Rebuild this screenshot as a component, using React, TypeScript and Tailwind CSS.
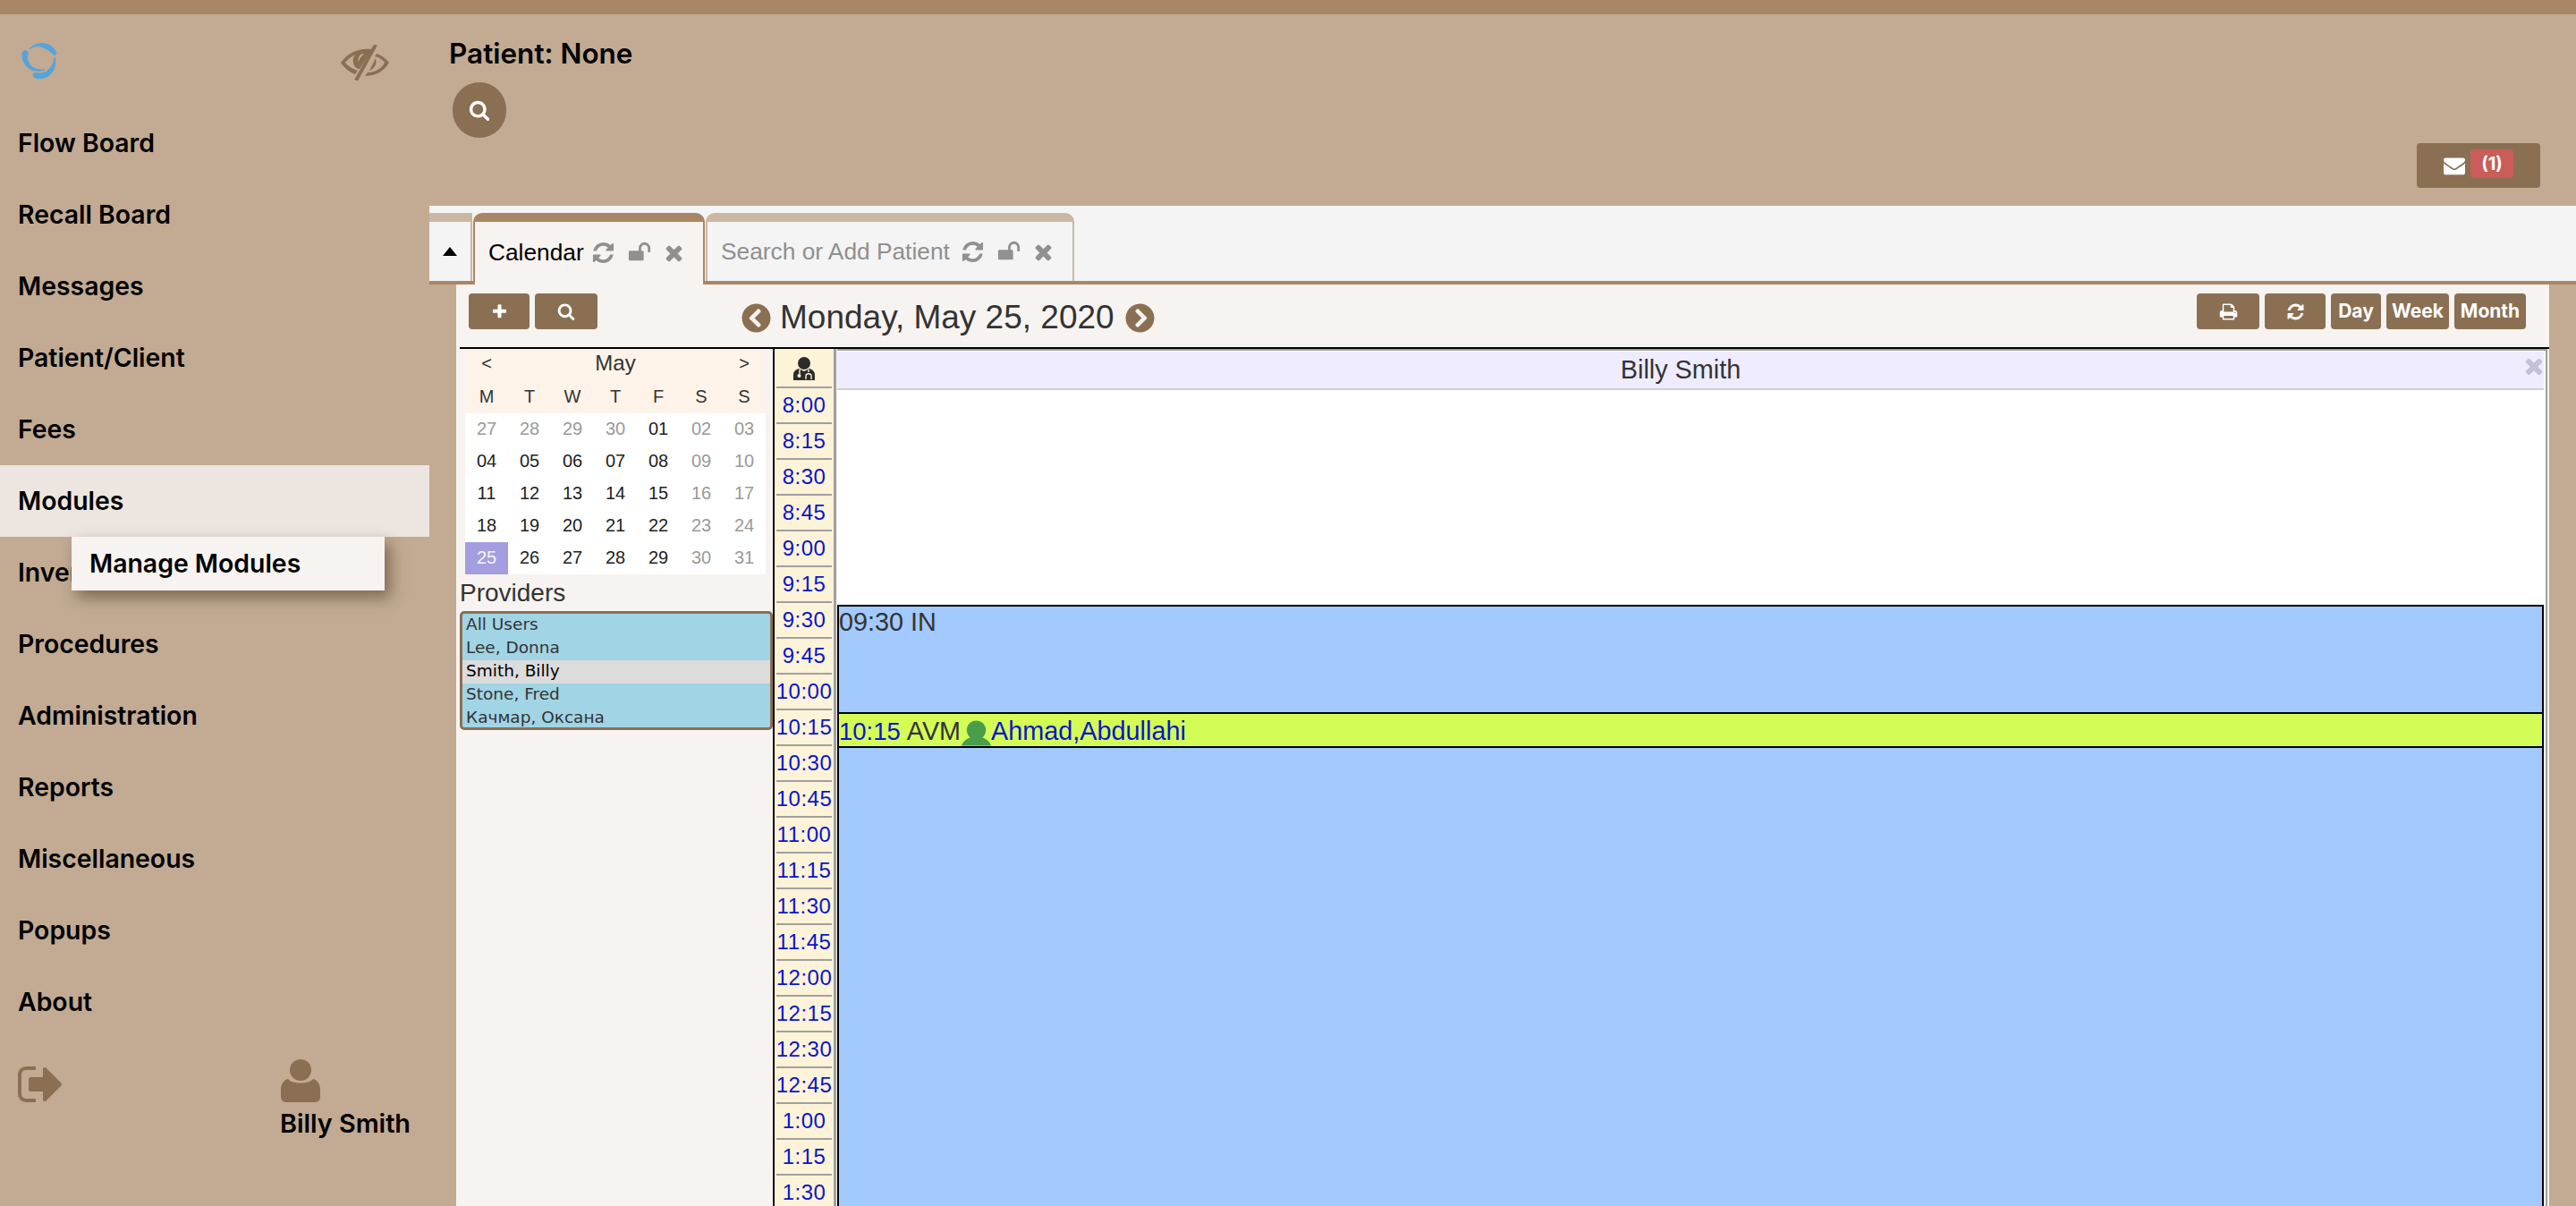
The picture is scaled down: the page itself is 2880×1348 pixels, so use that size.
import React from 'react';
import { FaChevronCircleLeft, FaChevronCircleRight } from 'react-icons/fa';

// glyph paths on a 1792 grid
const REFRESH = 'M1639 1056q0 5-1 7-64 268-268 434.5t-478 166.5q-146 0-282.5-55t-243.5-157l-129 129q-19 19-45 19t-45-19-19-45v-448q0-26 19-45t45-19h448q26 0 45 19t19 45-19 45l-137 137q71 66 161 102t187 36q134 0 250-65t186-179q11-17 53-117 8-23 30-23h192q13 0 22.5 9.5t9.5 22.5zm25-800v448q0 26-19 45t-45 19h-448q-26 0-45-19t-19-45 19-45l138-138q-148-137-349-137-134 0-250 65t-186 179q-11 17-53 117-8 23-30 23h-199q-13 0-22.5-9.5t-9.5-22.5v-7q65-268 270-434.5t480-166.5q146 0 284 55.5t245 156.5l130-129q19-19 45-19t45 19 19 45z';
const UNLOCK = 'M1728 576v256q0 26-19 45t-45 19h-64q-26 0-45-19t-19-45v-256q0-106-75-181t-181-75-181 75-75 181v192h96q40 0 68 28t28 68v576q0 40-28 68t-68 28h-960q-40 0-68-28t-28-68v-576q0-40 28-68t68-28h672v-192q0-185 131.5-316.5t316.5-131.5 316.5 131.5 131.5 316.5z';
const CLOSE = 'M1490 1322q0 40-28 68l-136 136q-28 28-68 28t-68-28l-294-294-294 294q-28 28-68 28t-68-28l-136-136q-28-28-28-68t28-68l294-294-294-294q-28-28-28-68t28-68l136-136q28-28 68-28t68 28l294 294 294-294q28-28 68-28t68 28l136 136q28 28 28 68t-28 68l-294 294 294 294q28 28 28 68z';
const SEARCH = 'M1216 832q0-185-131.5-316.5t-316.5-131.5-316.5 131.5-131.5 316.5 131.5 316.5 316.5 131.5 316.5-131.5 131.5-316.5zm512 832q0 52-38 90t-90 38q-54 0-90-38l-343-342q-179 124-399 124-143 0-273.5-55.5t-225-150-150-225-55.5-273.5 55.5-273.5 150-225 225-150 273.5-55.5 273.5 55.5 225 150 150 225 55.5 273.5q0 220-124 399l343 343q37 37 37 90z';
const PLUS = 'M1600 736v192q0 40-28 68t-68 28h-416v416q0 40-28 68t-68 28h-192q-40 0-68-28t-28-68v-416h-416q-40 0-68-28t-28-68v-192q0-40 28-68t68-28h416v-416q0-40 28-68t68-28h192q40 0 68 28t28 68v416h416q40 0 68 28t28 68z';
const PRINT = 'M448 1536h896v-256h-896v256zm0-640h896v-384h-160q-40 0-68-28t-28-68v-160h-640v640zm1152 64q0-26-19-45t-45-19-45 19-19 45 19 45 45 19 45-19 19-45zm128 0v416q0 13-9.5 22.5t-22.5 9.5h-224v160q0 40-28 68t-68 28h-960q-40 0-68-28t-28-68v-160h-224q-13 0-22.5-9.5t-9.5-22.5v-416q0-79 56.5-135.5t135.5-56.5h64v-544q0-40 28-68t68-28h672q40 0 88 20t76 48l152 152q28 28 48 76t20 88v256h64q79 0 135.5 56.5t56.5 135.5z';
const ENVELOPE = 'M1792 710v794q0 66-47 113t-113 47h-1472q-66 0-113-47t-47-113v-794q44 49 101 87 362 246 497 345 57 42 92.5 65.5t94.5 48 110 24.5h2q51 0 110-24.5t94.5-48 92.5-65.5q170-123 498-345 57-39 100-87zm0-294q0 79-49 151t-122 123q-376 261-468 325-10 7-42.5 30.5t-54 38-52 32.5-57.5 27-50 9h-2q-23 0-50-9t-57.5-27-52-32.5-54-38-42.5-30.5q-91-64-262-182.5t-205-142.5q-62-42-117-115.5t-55-136.5q0-78 41.5-130t118.5-52h1472q65 0 112.5 47t47.5 113z';
const SIGN_OUT = 'M704 1440q0 4 1 20t.5 26.5-3 23.5-10 19.5-20.5 6.5h-320q-119 0-203.5-84.5t-84.5-203.5v-704q0-119 84.5-203.5t203.5-84.5h320q13 0 22.5 9.5t9.5 22.5q0 4 1 20t.5 26.5-3 23.5-10 19.5-20.5 6.5h-320q-66 0-113 47t-47 113v704q0 66 47 113t113 47h312l11.5 1 11.5 3 8 5.5 7 9 2 13.5zm928-544q0 26-19 45l-544 544q-19 19-45 19t-45-19-19-45v-288h-448q-26 0-45-19t-19-45v-384q0-26 19-45t45-19h448v-288q0-26 19-45t45-19 45 19l544 544q19 19 19 45z';

function Glyph({ d, size, className }: { d: string; size: number; className?: string }) {
  return (
    <svg width={size} height={size} viewBox="0 0 1792 1792" fill="currentColor" className={className}>
      <path d={d} />
    </svg>
  );
}

const NAV = [
  'Flow Board', 'Recall Board', 'Messages', 'Patient/Client', 'Fees', 'Modules', 'Inventory',
  'Procedures', 'Administration', 'Reports', 'Miscellaneous', 'Popups', 'About',
];

const TIMES = [
  '8:00', '8:15', '8:30', '8:45', '9:00', '9:15', '9:30', '9:45', '10:00', '10:15', '10:30', '10:45',
  '11:00', '11:15', '11:30', '11:45', '12:00', '12:15', '12:30', '12:45', '1:00', '1:15', '1:30',
];

const WEEKS = [
  ['27', '28', '29', '30', '01', '02', '03'],
  ['04', '05', '06', '07', '08', '09', '10'],
  ['11', '12', '13', '14', '15', '16', '17'],
  ['18', '19', '20', '21', '22', '23', '24'],
  ['25', '26', '27', '28', '29', '30', '31'],
];

const PROVIDERS = ['All Users', 'Lee, Donna', 'Smith, Billy', 'Stone, Fred', 'Качмар, Оксана'];

function Logo() {
  return (
    <svg width="70" height="60" viewBox="0 0 210 180" fill="#55a3dc" stroke="#55a3dc" strokeWidth="3" strokeLinejoin="round">
      <path d="M158 68C150 45 120 32 95 40C85 43 75 48 70 55C85 47 100 44 112 50C130 56 142 66 150 76C156 76 160 73 158 68Z" />
      <path d="M46 68C50 60 60 60 64 68C58 85 62 105 80 118C90 125 105 128 120 125C100 135 75 130 60 115C48 102 42 82 46 68Z" />
      <path d="M82 140C88 132 105 142 120 135C140 126 150 105 153 85C160 110 150 135 130 148C115 156 90 158 84 150C81 147 81 143 82 140Z" />
    </svg>
  );
}

function EyeSlash() {
  return (
    <svg width="56" height="40" viewBox="0 0 56 40" fill="#8a6f53">
      <path d="M36 5C20 3 8 10 1 20C5 26 11 31 17 33L20 29C14 27 9 24 6 20C9 16 13 13 17 11C15 14 14 17 15 20C16 25 19 27 22 27Z" />
      <path d="M41 10C47 12 52 16 55 20C50 29 40 35 28 35L31 31C40 31 47 26 50 20C48 17 44 14 39 13Z" />
      <path d="M40 15C42 22 38 27 33 29Z" />
      <path d="M25 10C21 12 20 16 21 19C22 16 23 13 27 11Z" fill="#c2ab92" />
      <path d="M40 0L18 40" stroke="#8a6f53" strokeWidth="4" />
    </svg>
  );
}

function UserIcon() {
  return (
    <svg width="44" height="48" viewBox="0 0 44 48" fill="#8a6f53">
      <circle cx="22" cy="12" r="12" />
      <path d="M8 22C12 28 32 28 36 22C41 23 44 28 44 34V42C44 45 42 48 38 48H6C2 48 0 45 0 42V34C0 28 3 23 8 22Z" />
    </svg>
  );
}

function DoctorIcon() {
  return (
    <svg width="24" height="26" viewBox="0 0 24 26" fill="#2b2b2b">
      <circle cx="12" cy="7" r="7" />
      <path d="M0 26V20C0 16 3 14 6 13L12 16L18 13C21 14 24 16 24 20V26Z" />
      <circle cx="6.5" cy="21" r="2" fill="#fdf3d8" />
      <path d="M7 14V19M17 14V17M14 25V21C14 18 20 18 20 21V25" stroke="#fdf3d8" strokeWidth="1.4" fill="none" />
    </svg>
  );
}

function Sidebar() {
  return (
    <div className="w-[480px] shrink-0 font-['Inter',sans-serif] text-black">
      <div className="h-[104px] flex justify-between pl-[10px] pr-[44px] pt-[20px]">
        <Logo />
        <div className="pt-[14px]">
          <EyeSlash />
        </div>
      </div>
      {NAV.map((item) => (
        <div
          key={item}
          className={`relative h-[80px] flex items-center pl-[20px] text-[28.4px] font-semibold ${item === 'Modules' ? 'bg-[#ede5df]' : ''}`}
        >
          {item}
          {item === 'Modules' && (
            <div className="absolute z-10 left-[80px] top-full w-[350px] h-[60px] pl-[20px] flex items-center bg-[#f7f3f0] shadow-[6px_8px_16px_rgba(70,50,30,0.55)]">
              Manage Modules
            </div>
          )}
        </div>
      ))}
      <div className="flex justify-between pt-[24px] pl-[18px] pr-[21px]">
        <Glyph d={SIGN_OUT} size={56} className="text-[#8a6f53]" />
        <div className="flex flex-col">
          <div className="ml-[1px]">
            <UserIcon />
          </div>
          <div className="mt-[9px] text-[28.8px] leading-[30px] font-semibold">Billy Smith</div>
        </div>
      </div>
    </div>
  );
}

function Tab({ label, active, width, labelGap }: { label: string; active?: boolean; width: string; labelGap: string }) {
  return (
    <div
      className={`${width} shrink-0 flex items-center pl-[15px] rounded-t-[10px] border-t-[10px] border-x-2 ${
        active
          ? 'h-[80px] -mb-[4px] z-10 pb-[2px] bg-[#f7f3f0] border-[#a98665] text-black'
          : 'h-[76px] bg-[#f4f4f4] border-[#cbb8a3] text-[#8f8f8f]'
      }`}
    >
      <span className={`text-[26.3px] leading-none ${labelGap}`}>{label}</span>
      <Glyph d={REFRESH} size={27} className="text-[#909090]" />
      <Glyph d={UNLOCK} size={26} className="text-[#909090] ml-[14px]" />
      <Glyph d={CLOSE} size={27} className="text-[#909090] ml-[12px]" />
    </div>
  );
}

function ToolButton({ children, width }: { children: React.ReactNode; width: string }) {
  return (
    <div className={`${width} h-[40px] flex items-center justify-center rounded-[4px] bg-[#8a6f53] text-white font-['Inter',sans-serif] text-[21px] font-bold`}>
      {children}
    </div>
  );
}

function MiniCalendar() {
  return (
    <div className="ml-[6px] w-[336px] text-[20px] text-center">
      <div className="bg-[#fdf3e9] text-[#333]">
        <div className="h-[28px] leading-none grid grid-cols-7 items-center">
          <span>&lt;</span>
          <span className="col-span-5 text-[24px]">May</span>
          <span>&gt;</span>
        </div>
        <div className="h-[42px] pt-[4px] leading-none grid grid-cols-7 items-center">
          {['M', 'T', 'W', 'T', 'F', 'S', 'S'].map((d, i) => (
            <span key={i}>{d}</span>
          ))}
        </div>
      </div>
      <div className="bg-white">
        {WEEKS.map((week, w) => (
          <div key={w} className="grid grid-cols-7">
            {week.map((day, i) => {
              const muted = (w === 0 && i < 4) || i > 4;
              const selected = w === 4 && i === 0;
              return (
                <div
                  key={i}
                  className={`h-[36px] pb-[2px] flex items-center justify-center ${
                    selected ? 'bg-[#a49ee0] text-[#f4f4ff]' : muted ? 'text-[#9a9a9a]' : 'text-[#222]'
                  }`}
                >
                  {day}
                </div>
              );
            })}
          </div>
        ))}
      </div>
    </div>
  );
}

function Calendar() {
  return (
    <div className="flex-1 min-h-0 mx-[30px] bg-[#f7f3f0] font-['Liberation_Sans',sans-serif] text-[#333] overflow-hidden">
      <div className="h-[70px] flex items-start pt-[10px] pl-[14px] pr-[26px]">
        <ToolButton width="w-[68px]"><Glyph d={PLUS} size={19} /></ToolButton>
        <ToolButton width="w-[70px] ml-[6px]"><Glyph d={SEARCH} size={20} /></ToolButton>
        <div className="ml-[161px] mt-[5px] h-[44px] flex items-center">
          <FaChevronCircleLeft size={33} className="text-[#8a6f53]" />
          <span className="ml-[10px] mr-[12px] text-[37px] leading-[44px]">Monday, May 25, 2020</span>
          <FaChevronCircleRight size={33} className="text-[#8a6f53]" />
        </div>
        <div className="ml-auto flex gap-[6px]">
          <ToolButton width="w-[70px]"><Glyph d={PRINT} size={21} /></ToolButton>
          <ToolButton width="w-[68px]"><Glyph d={REFRESH} size={21} /></ToolButton>
          <ToolButton width="w-[56px]">Day</ToolButton>
          <ToolButton width="w-[70px]">Week</ToolButton>
          <ToolButton width="w-[80px]">Month</ToolButton>
        </div>
      </div>
      <div className="ml-[4px] h-full flex border-t-2 border-black">
        <div className="w-[350px] shrink-0 pt-[2px]">
          <MiniCalendar />
          <div className="mt-[3px] text-[28px] leading-[36px]">Providers</div>
          <div className="mt-[2px] w-[350px] h-[133px] border-[3px] border-[#8a6f53] rounded-[5px] bg-[#a1d4e5] font-['DejaVu_Sans',sans-serif] text-[18.5px] text-[#333]">
            {PROVIDERS.map((name) => (
              <div
                key={name}
                className={`h-[26px] pl-[4px] leading-[24px] ${name === 'Smith, Billy' ? 'bg-[#dcdcdc] text-black' : ''}`}
              >
                {name}
              </div>
            ))}
          </div>
        </div>
        <div className="w-[71px] shrink-0 border-l-2 border-r-[3px] border-l-black border-r-[#a0a0a0] bg-[#fdf3d8]">
          <div className="h-[44px] mx-[2px] border-b-2 border-[#a0a0a0] flex items-center justify-center pt-[2px]">
            <DoctorIcon />
          </div>
          {TIMES.map((t) => (
            <div key={t} className="h-[40px] mx-[2px] border-b-2 border-[#a0a0a0] flex items-center justify-center text-[24px] tracking-[0.5px] text-[#0715cc]">
              {t}
            </div>
          ))}
        </div>
        <div className="flex-1 min-w-0 border-r-2 border-[#a0a0a0] ml-[1px] mr-[2px] bg-white border-t-2 border-t-[#a0a0a0] pt-[1px] pr-[2px]">
          <div className="relative h-[43px] pr-[22px] bg-[#eeecfe] border-b-2 border-[#d0d0d0] flex items-center justify-center text-[28.8px]">
            Billy Smith
            <Glyph d={CLOSE} size={28} className="absolute right-[-3px] top-[2px] text-[#c4c0d8]" />
          </div>
          <div className="h-[240px]" />
          <div className="h-[120px] border-2 border-b-0 border-black bg-[#a2caff] text-[28.8px] leading-[34px]">
            <div className="pl-0">09:30 IN</div>
          </div>
          <div className="h-[40px] border-2 border-black bg-[#d4fc57] text-[28.8px] flex items-end leading-[33px]">
            <span className="text-[#0715cc] text-[27.5px]">10:15</span>
            <span className="ml-[7px]">AVM</span>
            <svg width="33" height="29" viewBox="0 0 34 29" fill="#4a9e4a" className="ml-[1px]">
              <ellipse cx="17" cy="11" rx="11" ry="11" />
              <path d="M0 29C2 23 8 20 12 19H22C26 20 32 23 34 29Z" />
            </svg>
            <span className="text-[#0715cc]">Ahmad,Abdullahi</span>
          </div>
          <div className="h-[600px] border-x-2 border-black bg-[#a2caff]" />
        </div>
      </div>
    </div>
  );
}

export default function App() {
  return (
    <div className="w-[2880px] h-[1348px] overflow-hidden flex flex-col bg-[#c2ab92]">
      <div className="h-4 shrink-0 bg-[#a98665]" />
      <div className="flex-1 min-h-0 flex">
        <Sidebar />
        <div className="flex-1 min-w-0 flex flex-col">
          <div className="h-[214px] shrink-0 flex flex-col pt-[25px] pl-[22px] pr-[40px]">
            <div className="font-['Inter',sans-serif] text-[31.5px] leading-[38px] font-semibold text-black">Patient: None</div>
            <div className="mt-[13px] ml-[4px] w-[60px] h-[62px] rounded-full bg-[#8a6f53] flex items-center justify-center text-white">
              <Glyph d={SEARCH} size={24} />
            </div>
            <div className="self-end mt-[6px] w-[138px] h-[50px] rounded-[4px] bg-[#8a6f53] flex items-center pl-[30px] text-white">
              <Glyph d={ENVELOPE} size={24} />
              <span className="ml-[6px] w-[48px] h-[32px] -mt-[4px] rounded-[4px] bg-[#ca5d58] flex items-center justify-center font-['Inter',sans-serif] text-[20px] font-bold">(1)</span>
            </div>
          </div>
          <div className="h-[88px] shrink-0 flex items-end pt-[8px] bg-[#f4f4f4] border-b-4 border-[#a98665] font-['Liberation_Sans',sans-serif]">
            <div className="w-[48px] h-[76px] shrink-0 border-t-[10px] border-r-2 border-[#cbb8a3] flex items-center justify-center">
              <svg width="16" height="10" viewBox="0 0 16 10"><path d="M8 0L16 10H0Z" fill="#000" /></svg>
            </div>
            <Tab label="Calendar" active width="w-[259px] ml-[1px]" labelGap="mr-[8px]" />
            <Tab label="Search or Add Patient" width="w-[412px] ml-[1px]" labelGap="mr-[12px]" />
          </div>
          <Calendar />
        </div>
      </div>
    </div>
  );
}
